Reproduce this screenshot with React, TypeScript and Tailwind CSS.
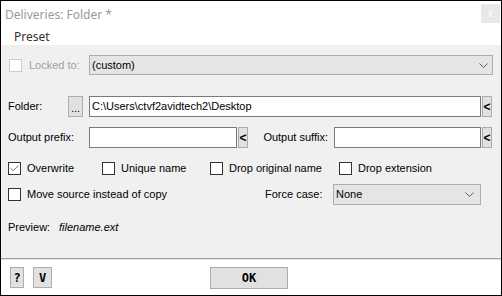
import { Check } from 'lucide-react';

function Chevron() {
  return (
    <svg width="9" height="5" viewBox="0 0 9 5" className="text-[#606060]">
      <polyline points="0.5,0.5 4.5,4.5 8.5,0.5" fill="none" stroke="currentColor" strokeWidth="1" />
    </svg>
  );
}

function Box({ checked, disabled }: { checked?: boolean; disabled?: boolean }) {
  return (
    <div
      className={`flex h-[13px] w-[13px] shrink-0 items-center justify-center border bg-white ${
        disabled ? 'border-[#cccccc]' : 'border-[#333333]'
      }`}
    >
      {checked && <Check className="h-[11px] w-[11px] text-[#333]" strokeWidth={1.5} />}
    </div>
  );
}

function Arrow() {
  return (
    <div className="flex h-[21px] w-[10px] shrink-0 items-center justify-center border border-[#adadad] bg-[#e1e1e1] text-[12px] font-bold leading-none text-black">
      &lt;
    </div>
  );
}

function CheckItem({ label, checked, width }: { label: string; checked?: boolean; width: string }) {
  return (
    <div className={`flex items-center ${width}`}>
      <Box checked={checked} />
      <span className="ml-[6px]">{label}</span>
    </div>
  );
}

export default function App() {
  return (
    <div className="flex h-[296px] w-[502px] flex-col border border-black bg-white font-['Liberation_Sans',Arial,sans-serif] text-[11px] text-black">
      {/* Title bar */}
      <div className="flex h-[28px] items-start justify-between">
        <span className="mt-[5px] ml-[4px] font-['Noto_Sans',sans-serif] text-[12px] text-[#999999]">
          Deliveries: Folder *
        </span>
        <div className="mt-[3px] mr-[1px] flex h-[19px] w-[19px] items-center justify-center bg-[#e8e8e8] font-['Noto_Sans',sans-serif] text-[10px] text-white">
          x
        </div>
      </div>

      {/* Menu */}
      <div className="flex h-[16px] items-center pl-[13px] font-['Noto_Sans',sans-serif] text-[12px] text-[#333]">
        Preset
      </div>

      {/* Body */}
      <div className="flex flex-1 flex-col border-b border-[#a0a0a0] bg-[#f0f0f0] pl-[7px]">
        <div className="mt-[10px] flex h-[20px] items-center">
          <div className="flex w-[81px] items-center pl-[1px]">
            <Box disabled />
            <span className="ml-[7px] text-[#a0a0a0]">Locked to:</span>
          </div>
          <div className="flex h-[20px] w-[404px] items-center justify-between border border-[#adadad] bg-[#e5e5e5] pr-[4px] pl-[2px]">
            <span>(custom)</span>
            <Chevron />
          </div>
        </div>

        <div className="mt-[21px] flex h-[21px] items-center">
          <span className="w-[60px]">Folder:</span>
          <div className="flex h-[21px] w-[15px] items-end justify-center border border-[#adadad] bg-[#e1e1e1] pb-[2px] leading-none">
            ...
          </div>
          <div className="flex h-[21px] w-[392px] items-center border border-[#7a7a7a] bg-white pl-[2px] ml-[6px]">
            C:\Users\ctvf2avidtech2\Desktop
          </div>
          <div className="ml-[1px]">
            <Arrow />
          </div>
        </div>

        <div className="mt-[10px] flex h-[21px] items-center">
          <span className="w-[81px]">Output prefix:</span>
          <div className="h-[21px] w-[148px] border border-[#7a7a7a] bg-white" />
          <div className="ml-[1px]">
            <Arrow />
          </div>
          <span className="w-[80px] text-right">Output suffix:</span>
          <div className="ml-[6px] h-[21px] w-[147px] border border-[#7a7a7a] bg-white" />
          <div className="ml-[1px]">
            <Arrow />
          </div>
        </div>

        <div className="mt-[10px] flex h-[20px] items-center">
          <CheckItem label="Overwrite" checked width="w-[94px]" />
          <CheckItem label="Unique name" width="w-[108px]" />
          <CheckItem label="Drop original name" width="w-[129px]" />
          <CheckItem label="Drop extension" width="w-[140px]" />
        </div>

        <div className="mt-[6px] flex h-[21px] items-center">
          <CheckItem label="Move source instead of copy" width="w-[257px]" />
          <span className="w-[68px]">Force case:</span>
          <div className="flex h-[21px] w-[148px] items-center justify-between border border-[#adadad] bg-[#e5e5e5] pr-[6px] pl-[2px]">
            <span>None</span>
            <Chevron />
          </div>
        </div>

        <div className="mt-[14px] flex h-[16px] items-center">
          <span className="w-[51px]">Preview:</span>
          <span className="italic">filename.ext</span>
        </div>
      </div>

      {/* Bottom bar */}
      <div className="flex h-[36px] items-start border-t border-[#e3e3e3] bg-white pt-[7px] font-['DejaVu_Sans_Mono',monospace] text-[12px] font-bold">
        <div className="ml-[9px] flex h-[21px] w-[14px] items-center justify-center border border-[#adadad] bg-[#e1e1e1]">
          ?
        </div>
        <div className="ml-[9px] flex h-[21px] w-[19px] items-center justify-center border border-[#adadad] bg-[#e1e1e1]">
          V
        </div>
        <div className="ml-[158px] flex h-[22px] w-[78px] items-center justify-center border border-[#adadad] bg-[#e1e1e1]">
          OK
        </div>
      </div>
    </div>
  );
}
